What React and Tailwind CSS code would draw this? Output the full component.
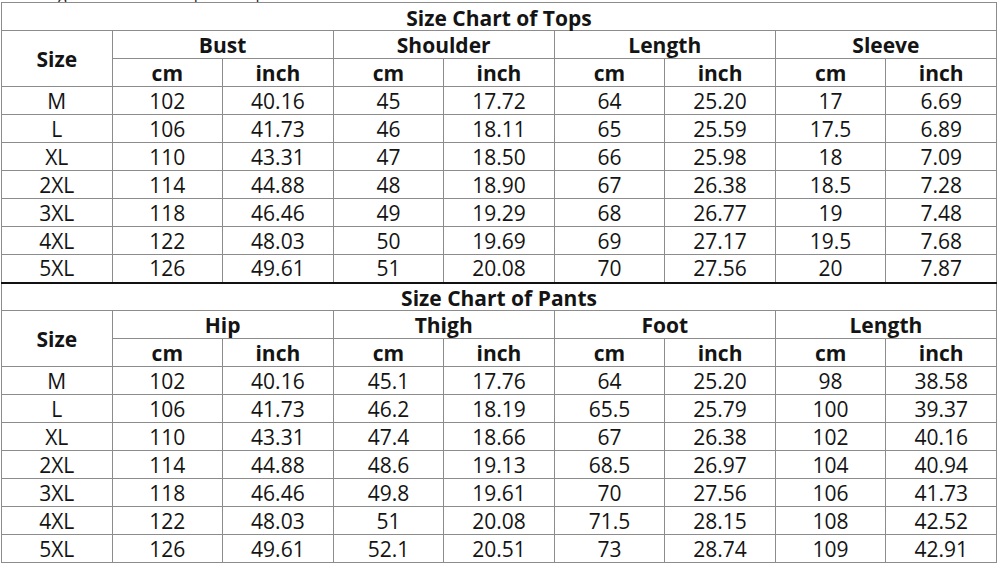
import React from "react";

const tops = {
  title: "Size Chart of Tops",
  groups: ["Bust", "Shoulder", "Length", "Sleeve"],
  rows: [
    ["M", "102", "40.16", "45", "17.72", "64", "25.20", "17", "6.69"],
    ["L", "106", "41.73", "46", "18.11", "65", "25.59", "17.5", "6.89"],
    ["XL", "110", "43.31", "47", "18.50", "66", "25.98", "18", "7.09"],
    ["2XL", "114", "44.88", "48", "18.90", "67", "26.38", "18.5", "7.28"],
    ["3XL", "118", "46.46", "49", "19.29", "68", "26.77", "19", "7.48"],
    ["4XL", "122", "48.03", "50", "19.69", "69", "27.17", "19.5", "7.68"],
    ["5XL", "126", "49.61", "51", "20.08", "70", "27.56", "20", "7.87"],
  ],
};

const pants = {
  title: "Size Chart of Pants",
  groups: ["Hip", "Thigh", "Foot", "Length"],
  rows: [
    ["M", "102", "40.16", "45.1", "17.76", "64", "25.20", "98", "38.58"],
    ["L", "106", "41.73", "46.2", "18.19", "65.5", "25.79", "100", "39.37"],
    ["XL", "110", "43.31", "47.4", "18.66", "67", "26.38", "102", "40.16"],
    ["2XL", "114", "44.88", "48.6", "19.13", "68.5", "26.97", "104", "40.94"],
    ["3XL", "118", "46.46", "49.8", "19.61", "70", "27.56", "106", "41.73"],
    ["4XL", "122", "48.03", "51", "20.08", "71.5", "28.15", "108", "42.52"],
    ["5XL", "126", "49.61", "52.1", "20.51", "73", "28.74", "109", "42.91"],
  ],
};

const cell = "border border-[#8c8c8c] h-[28px] p-0 text-center align-middle leading-[26px] whitespace-nowrap";

function Section({ data, first }) {
  return (
    <>
      <tr>
        <td
          colSpan={9}
          className={`${cell} font-bold ${first ? "" : "border-t-2 border-t-[#111]"}`}
        >
          <span className="relative top-[1px]">{data.title}</span>
        </td>
      </tr>
      <tr>
        <td rowSpan={2} className={`${cell} font-bold`}>
          Size
        </td>
        {data.groups.map((g) => (
          <td key={g} colSpan={2} className={`${cell} font-bold`}>
            {g}
          </td>
        ))}
      </tr>
      <tr>
        {data.groups.map((g) => (
          <React.Fragment key={g}>
            <td className={`${cell} font-bold`}>cm</td>
            <td className={`${cell} font-bold`}>inch</td>
          </React.Fragment>
        ))}
      </tr>
      {data.rows.map((r) => (
        <tr key={r[0]}>
          {r.map((v, i) => (
            <td key={i} className={cell}>
              {v}
            </td>
          ))}
        </tr>
      ))}
    </>
  );
}

export default function App() {
  return (
    <div
      className="w-[1000px] h-[567px] bg-white overflow-hidden text-[#141414]"
      style={{ fontFamily: '"Open Sans", "Liberation Sans", sans-serif' }}
    >
      <div className="h-[2px] overflow-hidden relative">
        <div className="flex text-[16px] leading-[16px] -mt-[14px] text-[#222]">
          <span className="ml-[58px]">g</span>
          <span className="ml-[127px]">p</span>
          <span className="ml-[52px]">p</span>
        </div>
      </div>
      <table className="ml-[1px] w-[996px] table-fixed border-collapse text-[21px]">
        <tbody>
          <Section data={tops} first />
          <Section data={pants} />
        </tbody>
      </table>
    </div>
  );
}
